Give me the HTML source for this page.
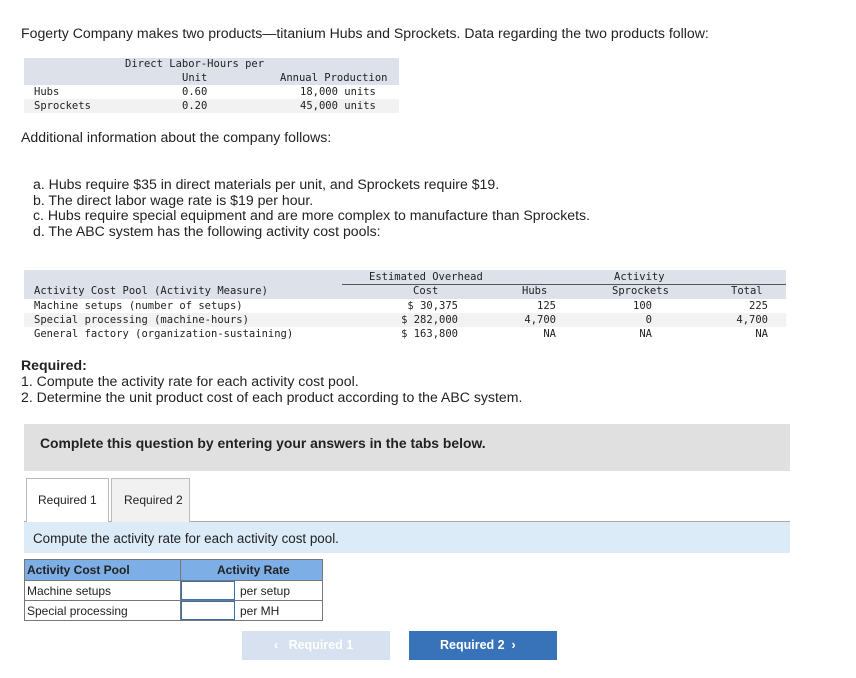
<!DOCTYPE html>
<html><head><meta charset="utf-8"><style>
body{margin:0;width:856px;height:678px;background:#fff;font-family:"Liberation Sans",sans-serif;color:#222;position:relative;overflow:hidden}
.a{position:absolute;white-space:nowrap}
.t{font-size:14.1px}
.m{font-family:"DejaVu Sans Mono","Liberation Mono",monospace;font-size:10.5px;color:#222}
.r{text-align:right}
.box{position:absolute}
</style></head><body>
<div class="a t" style="left:21px;top:25px">Fogerty Company makes two products—titanium Hubs and Sprockets. Data regarding the two products follow:</div>
<div class="box" style="left:24px;top:58px;width:375px;height:27px;background:#dde1ea"></div>
<div class="box" style="left:24px;top:99px;width:375px;height:14px;background:#f2f2f2"></div>
<div class="a m" style="left:125px;top:58px">Direct Labor-Hours per</div>
<div class="a m" style="left:182px;top:72px">Unit</div>
<div class="a m" style="left:280px;top:72px">Annual Production</div>
<div class="a m" style="left:34px;top:86px">Hubs</div>
<div class="a m" style="left:182px;top:86px">0.60</div>
<div class="a m" style="left:300px;top:86px">18,000 units</div>
<div class="a m" style="left:34px;top:100px">Sprockets</div>
<div class="a m" style="left:182px;top:100px">0.20</div>
<div class="a m" style="left:300px;top:100px">45,000 units</div>
<div class="a t" style="left:21px;top:129px">Additional information about the company follows:</div>
<div class="a t" style="left:33px;top:177px;line-height:15.7px">a. Hubs require $35 in direct materials per unit, and Sprockets require $19.<br>b. The direct labor wage rate is $19 per hour.<br>c. Hubs require special equipment and are more complex to manufacture than Sprockets.<br>d. The ABC system has the following activity cost pools:</div>
<div class="box" style="left:24px;top:270px;width:762px;height:29px;background:#dde1ea"></div>
<div class="box" style="left:24px;top:313px;width:762px;height:14px;background:#f2f2f2"></div>
<div class="box" style="left:342px;top:284px;width:444px;height:1px;background:#555"></div>
<div class="a m" style="left:369px;top:271px">Estimated Overhead</div>
<div class="a m" style="left:413px;top:285px">Cost</div>
<div class="a m" style="left:614px;top:271px">Activity</div>
<div class="a m" style="left:34px;top:285px">Activity Cost Pool (Activity Measure)</div>
<div class="a m" style="left:522px;top:285px">Hubs</div>
<div class="a m" style="left:612px;top:285px">Sprockets</div>
<div class="a m" style="left:731px;top:285px">Total</div>
<div class="a m" style="left:34px;top:299px;line-height:14px">Machine setups (number of setups)<br>Special processing (machine-hours)<br>General factory (organization-sustaining)</div>
<div class="a m r" style="left:380px;width:78px;top:299px;line-height:14px">$ 30,375<br>$ 282,000<br>$ 163,800</div>
<div class="a m r" style="left:500px;width:56px;top:299px;line-height:14px">125<br>4,700<br>NA</div>
<div class="a m r" style="left:600px;width:52px;top:299px;line-height:14px">100<br>0<br>NA</div>
<div class="a m r" style="left:700px;width:68px;top:299px;line-height:14px">225<br>4,700<br>NA</div>
<div class="a t" style="left:21px;top:357px;font-weight:bold">Required:</div>
<div class="a t" style="left:21px;top:374px;line-height:15.5px">1. Compute the activity rate for each activity cost pool.<br>2. Determine the unit product cost of each product according to the ABC system.</div>
<div class="box" style="left:24px;top:424px;width:766px;height:47px;background:#e0e0e0"></div>
<div class="a" style="left:40px;top:435px;font-size:13.9px;font-weight:bold;color:#222">Complete this question by entering your answers in the tabs below.</div>
<div class="box" style="left:24px;top:521px;width:766px;height:1px;background:#aaa"></div>
<div class="box" style="left:26px;top:478px;width:81px;height:44px;background:#fff;border:1px solid #bbb;border-bottom:none"></div>
<div class="box" style="left:111px;top:478px;width:77px;height:43px;background:#f1f1f1;border:1px solid #bbb;border-bottom:none"></div>
<div class="a" style="left:38px;top:493px;font-size:12px">Required 1</div>
<div class="a" style="left:124px;top:493px;font-size:12px">Required 2</div>
<div class="box" style="left:24px;top:522px;width:766px;height:31px;background:#dcebf8"></div>
<div class="a" style="left:33px;top:531px;font-size:13.4px">Compute the activity rate for each activity cost pool.</div>
<div class="box" style="left:24px;top:559px;width:299px;height:62px;border:1px solid #777;box-sizing:border-box"></div>
<div class="box" style="left:25px;top:560px;width:297px;height:20px;background:#7daee6"></div>
<div class="box" style="left:24px;top:580px;width:299px;height:1px;background:#777"></div>
<div class="box" style="left:24px;top:600px;width:299px;height:1px;background:#777"></div>
<div class="box" style="left:180px;top:559px;width:1px;height:62px;background:#777"></div>
<div class="box" style="left:181px;top:581px;width:54px;height:19px;border:1.5px solid #3a6fb5;box-sizing:border-box"></div>
<div class="box" style="left:181px;top:601px;width:54px;height:19px;border:1.5px solid #3a6fb5;box-sizing:border-box"></div>
<div class="a" style="left:27px;top:563px;font-size:12px;font-weight:bold">Activity Cost Pool</div>
<div class="a" style="left:217px;top:563px;font-size:12px;font-weight:bold">Activity Rate</div>
<div class="a" style="left:27px;top:584px;font-size:12px">Machine setups</div>
<div class="a" style="left:27px;top:604px;font-size:12px">Special processing</div>
<div class="a" style="left:240px;top:584px;font-size:12px">per setup</div>
<div class="a" style="left:240px;top:604px;font-size:12px">per MH</div>
<div class="box" style="left:242px;top:631px;width:148px;height:29px;background:#d7e1ef"></div>
<div class="a" style="left:274px;top:638px;font-size:12.5px;font-weight:bold;color:#fff">‹&nbsp;&nbsp; Required 1</div>
<div class="box" style="left:409px;top:631px;width:148px;height:29px;background:#3873b9"></div>
<div class="a" style="left:440px;top:638px;font-size:12.5px;font-weight:bold;color:#fff">Required 2 &nbsp;›</div>
</body></html>
